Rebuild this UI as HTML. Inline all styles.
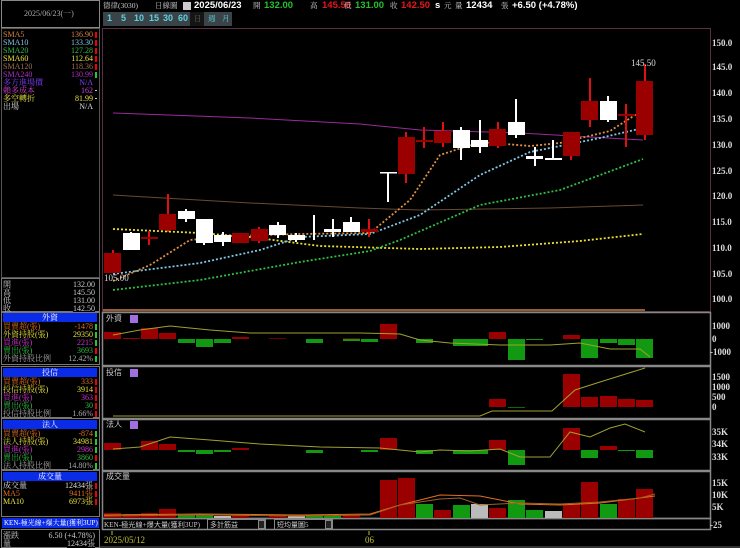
<!DOCTYPE html>
<html><head><meta charset="utf-8"><style>
*{margin:0;padding:0;box-sizing:border-box}
body{width:740px;height:548px;background:#000;overflow:hidden;position:relative;font-family:"Liberation Serif","Noto Serif CJK SC","Noto Sans CJK TC",serif;font-size:9px;color:#ddd}
.a{position:absolute;white-space:nowrap;line-height:1}
.row{position:absolute;left:3px;width:94px;height:9px;font-size:8px;line-height:9px;overflow:hidden}
.row .v{position:absolute;right:4px;background:#000}
.row .m{position:absolute;right:0;width:2px;height:6px;top:2px}
.hd{position:absolute;left:3px;width:94px;height:9px;background:#0a2be8;color:#fff;text-align:center;font-size:8px;line-height:9px}
.box{position:absolute;left:1px;width:99px;border:1px solid #777}
.b{font-family:"Liberation Sans","Noto Sans CJK TC",sans-serif;font-weight:bold;font-size:9.5px}
.s{color:#ccc;font-size:7.5px;top:2px}
.btn{position:absolute;top:14px;color:#5fd0e0;font-family:"Liberation Sans",sans-serif;font-weight:bold;font-size:9px;line-height:1}
</style></head><body>

<div class="box" style="top:0;height:28px;border-color:#888"></div>
<div class="a" style="left:24px;top:10px;color:#aaa;font-size:8px">2025/06/23(一)</div>
<div class="box" style="top:28px;height:250px;border-color:#555"></div>
<div class="row" style="top:30px;color:#d9843a">SMA5<span class="v">136.90</span><span class="m" style="background:#e00"></span></div>
<div class="row" style="top:38px;color:#7fc4e8">SMA10<span class="v">133.30</span><span class="m" style="background:#e00"></span></div>
<div class="row" style="top:46px;color:#2fbf3f">SMA20<span class="v">127.28</span><span class="m" style="background:#e00"></span></div>
<div class="row" style="top:54px;color:#e8e040">SMA60<span class="v">112.64</span><span class="m" style="background:#e00"></span></div>
<div class="row" style="top:62px;color:#a07050">SMA120<span class="v">118.36</span><span class="m" style="background:#e00"></span></div>
<div class="row" style="top:70px;color:#b030c0">SMA240<span class="v">130.99</span><span class="m" style="background:#2c2"></span></div>
<div class="row" style="top:78px;color:#8040ff">多方進場價<span class="v">N/A</span></div>
<div class="row" style="top:86px;color:#d040d0">賴多成本<span class="v">162</span><span class="m" style="background:#ccc;height:1px;top:4px"></span></div>
<div class="row" style="top:94px;color:#e8e040">多空轉折<span class="v">81.99</span><span class="m" style="background:#ccc;height:1px;top:4px"></span></div>
<div class="row" style="top:102px;color:#ddd">出場<span class="v">N/A</span></div>

<div class="box" style="top:278px;height:34px;border-color:#777"></div>
<div class="row" style="top:280px;color:#ccc">開<span class="v" style="right:2px">132.00</span></div>
<div class="row" style="top:288px;color:#ccc">高<span class="v" style="right:2px">145.50</span></div>
<div class="row" style="top:296px;color:#ccc">低<span class="v" style="right:2px">131.00</span></div>
<div class="row" style="top:304px;color:#ccc">收<span class="v" style="right:2px">142.50</span></div>

<div class="box" style="top:312px;height:53px;border-color:#777"></div>
<div class="hd" style="top:313px">外資</div>
<div class="row" style="top:322px;color:#e07020">買賣超(張)<span class="v">-1478</span><span class="m" style="background:#2c2"></span></div>
<div class="row" style="top:330px;color:#e8e040">外資持股(張)<span class="v">29350</span><span class="m" style="background:#2c2"></span></div>
<div class="row" style="top:338px;color:#d030d0">買進(張)<span class="v">2215</span><span class="m" style="background:#2c2"></span></div>
<div class="row" style="top:346px;color:#2fbf3f">賣出(張)<span class="v">3693</span><span class="m" style="background:#e00"></span></div>
<div class="row" style="top:354px;color:#aaa">外資持股比例<span class="v">12.42%</span><span class="m" style="background:#2c2"></span></div>

<div class="box" style="top:366px;height:52px;border-color:#777"></div>
<div class="hd" style="top:368px">投信</div>
<div class="row" style="top:377px;color:#e07020">買賣超(張)<span class="v">333</span><span class="m" style="background:#e00"></span></div>
<div class="row" style="top:385px;color:#e8e040">投信持股(張)<span class="v">3914</span><span class="m" style="background:#e00"></span></div>
<div class="row" style="top:393px;color:#d030d0">買進(張)<span class="v">363</span><span class="m" style="background:#e00"></span></div>
<div class="row" style="top:401px;color:#2fbf3f">賣出(張)<span class="v">30</span><span class="m" style="background:#e00"></span></div>
<div class="row" style="top:409px;color:#aaa">投信持股比例<span class="v">1.66%</span><span class="m" style="background:#e00"></span></div>

<div class="box" style="top:418px;height:52px;border-color:#777"></div>
<div class="hd" style="top:420px">法人</div>
<div class="row" style="top:429px;color:#e07020">買賣超(張)<span class="v">-874</span><span class="m" style="background:#2c2"></span></div>
<div class="row" style="top:437px;color:#e8e040">法人持股(張)<span class="v">34981</span><span class="m" style="background:#2c2"></span></div>
<div class="row" style="top:445px;color:#d030d0">買進(張)<span class="v">2986</span><span class="m" style="background:#2c2"></span></div>
<div class="row" style="top:453px;color:#2fbf3f">賣出(張)<span class="v">3860</span><span class="m" style="background:#e00"></span></div>
<div class="row" style="top:461px;color:#aaa">法人持股比例<span class="v">14.80%</span><span class="m" style="background:#2c2"></span></div>

<div class="box" style="top:470px;height:47px;border-color:#777"></div>
<div class="hd" style="top:472px">成交量</div>
<div class="row" style="top:481px;color:#ddd">成交量<span class="v">12434張</span><span class="m" style="background:#e00"></span></div>
<div class="row" style="top:489px;color:#e07020">MA5<span class="v">9411張</span><span class="m" style="background:#e00"></span></div>
<div class="row" style="top:497px;color:#e8e040">MA10<span class="v">6973張</span><span class="m" style="background:#e00"></span></div>

<div class="a" style="left:2px;top:518px;width:97px;height:10px;background:#0a2be8;color:#fff;font-size:7px;line-height:10px;padding-left:2px;overflow:hidden">KEN-極光線+爆大量(獲利3UP)</div>
<div class="box" style="top:529px;height:19px;border-color:#777"></div>
<div class="row" style="top:531px;color:#ccc">漲跌<span class="v" style="right:2px">6.50 (+4.78%)</span></div>
<div class="row" style="top:539px;color:#ccc">量<span class="v" style="right:2px">12434張</span></div>

<!-- top bar -->
<div class="a s" style="left:103px">德律(3030)</div>
<div class="a s" style="left:155px">日線圖</div>
<div class="a" style="left:183px;top:2px;width:8px;height:8px;background:#ccc"></div>
<div class="a b" style="left:194px;top:1px;color:#fff">2025/06/23</div>
<div class="a s" style="left:253px">開</div>
<div class="a b" style="left:264px;top:1px;color:#22c22a">132.00</div>
<div class="a s" style="left:310px">高</div>
<div class="a b" style="left:322px;top:1px;color:#e8151a">145.50</div>
<div class="a s" style="left:344px">低</div>
<div class="a b" style="left:355px;top:1px;color:#22c22a">131.00</div>
<div class="a s" style="left:390px">收</div>
<div class="a b" style="left:401px;top:1px;color:#e8151a">142.50</div>
<div class="a b" style="left:435px;top:1px;color:#fff">s</div>
<div class="a s" style="left:444px">元</div>
<div class="a s" style="left:455px">量</div>
<div class="a b" style="left:466px;top:1px;color:#fff">12434</div>
<div class="a s" style="left:501px">張</div>
<div class="a b" style="left:512px;top:1px;color:#fff">+6.50 (+4.78%)</div>

<div class="a" style="left:103px;top:12px;width:129px;height:14px;background:#3a4448"></div>
<div class="btn" style="left:107px">1</div>
<div class="btn" style="left:121px">5</div>
<div class="btn" style="left:134px">10</div>
<div class="btn" style="left:149px">15</div>
<div class="btn" style="left:163px">30</div>
<div class="btn" style="left:178px">60</div>
<div class="a" style="left:190px;top:12px;width:14px;height:14px;background:#151515"></div>
<div class="a" style="left:194px;top:15px;color:#666;font-size:7.5px">日</div>
<div class="a" style="left:208px;top:15px;color:#5fd0e0;font-size:7.5px">週</div>
<div class="a" style="left:222px;top:15px;color:#5fd0e0;font-size:7.5px">月</div>

<svg class="a" style="left:0;top:0" width="740" height="548" font-family="Liberation Serif, serif" font-size="9">
<rect x="102.5" y="28.5" width="608" height="283" fill="none" stroke="#5a3040"/>
<g stroke="#888" stroke-width="1.5" fill="none">
<rect x="102.5" y="312.5" width="608" height="53"/>
<rect x="102.5" y="366.5" width="608" height="52"/>
<rect x="102.5" y="419.5" width="608" height="51"/>
<rect x="102.5" y="471.5" width="608" height="47"/>
<rect x="102.5" y="518.5" width="608" height="11"/>
</g>
<line x1="103" y1="310" x2="645" y2="310" stroke="#c08040" stroke-width="1.5"/>
<g fill="#ddd" font-weight="bold" font-size="9">
<text x="712" y="46">150.0</text><text x="712" y="70">145.0</text><text x="712" y="96">140.0</text><text x="712" y="122">135.0</text><text x="712" y="148">130.0</text><text x="712" y="174">125.0</text><text x="712" y="199">120.0</text><text x="712" y="225">115.0</text><text x="712" y="251">110.0</text><text x="712" y="277">105.0</text><text x="712" y="302">100.0</text>
<text x="712" y="329">1000</text><text x="712" y="342">0</text><text x="710" y="355">-1000</text>
<text x="712" y="380">1500</text><text x="712" y="390">1000</text><text x="712" y="400">500</text><text x="712" y="410">0</text>
<text x="712" y="435">35K</text><text x="712" y="447">34K</text><text x="712" y="460">33K</text>
<text x="712" y="486">15K</text><text x="712" y="498">10K</text><text x="712" y="510">5K</text><text x="710" y="528">-25</text>
</g>
<polyline points="113,113 250,118 360,124 420,130 520,133 643,140" fill="none" stroke="#9a2a9a" stroke-width="1"/>
<polyline points="113,195 250,203 360,208 420,210 550,208 643,205" fill="none" stroke="#6a4a30" stroke-width="1"/>
<g fill="none" stroke-width="1.8" stroke-dasharray="2 2">
<polyline points="113,229 200,233 250,237 320,246 420,249 500,247 580,241 643,234" stroke="#e8e030"/>
<polyline points="113,290 200,280 300,262 370,251 400,240 480,205 560,190 643,159" stroke="#30c040"/>
<polyline points="113,274 200,263 260,250 300,237 370,234 420,215 480,175 530,152 600,138 643,128" stroke="#80c8e8"/>
<polyline points="113,281 150,265 190,240 230,236 300,234 370,233 410,200 440,155 480,142 530,146 560,143 610,131 643,110" stroke="#e09040"/>
</g>
<g stroke-width="2">
<g stroke="#e01010"><line x1="113" y1="250" x2="113" y2="273"/><line x1="149" y1="231" x2="149" y2="245"/><line x1="168" y1="194" x2="168" y2="232"/><line x1="241" y1="233" x2="241" y2="243"/><line x1="259" y1="227" x2="259" y2="243"/><line x1="369" y1="219" x2="369" y2="237"/><line x1="406" y1="132" x2="406" y2="183"/><line x1="424" y1="127" x2="424" y2="148"/><line x1="443" y1="122" x2="443" y2="147"/><line x1="498" y1="122" x2="498" y2="148"/><line x1="571" y1="132" x2="571" y2="160"/><line x1="590" y1="78" x2="590" y2="127"/><line x1="626" y1="104" x2="626" y2="147"/><line x1="645" y1="64" x2="645" y2="140"/></g>
<g stroke="#fff"><line x1="131" y1="232" x2="131" y2="250"/><line x1="186" y1="209" x2="186" y2="222"/><line x1="204" y1="219" x2="204" y2="245"/><line x1="223" y1="232" x2="223" y2="246"/><line x1="278" y1="222" x2="278" y2="238"/><line x1="296" y1="233" x2="296" y2="242"/><line x1="314" y1="215" x2="314" y2="240"/><line x1="333" y1="219" x2="333" y2="237"/><line x1="351" y1="217" x2="351" y2="232"/><line x1="388" y1="172" x2="388" y2="202"/><line x1="461" y1="127" x2="461" y2="160"/><line x1="480" y1="120" x2="480" y2="153"/><line x1="516" y1="99" x2="516" y2="138"/><line x1="535" y1="147" x2="535" y2="166"/><line x1="553" y1="140" x2="553" y2="160"/><line x1="608" y1="96" x2="608" y2="122"/></g>
</g>
<g fill="#9a0000">
<rect x="104" y="253" width="17" height="20"/><rect x="141" y="237" width="17" height="2"/><rect x="159" y="214" width="17" height="16"/><rect x="232" y="233" width="17" height="10"/><rect x="251" y="229" width="17" height="12"/><rect x="361" y="229" width="17" height="3"/><rect x="398" y="137" width="17" height="37"/><rect x="416" y="140" width="17" height="2"/><rect x="434" y="131" width="17" height="12"/><rect x="489" y="129" width="17" height="17"/><rect x="563" y="132" width="17" height="24"/><rect x="581" y="101" width="17" height="19"/><rect x="618" y="114" width="17" height="2"/><rect x="636" y="81" width="17" height="54"/>
</g>
<g fill="#fff">
<rect x="123" y="233" width="17" height="17"/><rect x="178" y="211" width="17" height="8"/><rect x="196" y="219" width="17" height="24"/><rect x="214" y="235" width="17" height="7"/><rect x="269" y="225" width="17" height="10"/><rect x="288" y="235" width="17" height="5"/><rect x="324" y="229" width="17" height="3"/><rect x="343" y="222" width="17" height="10"/><rect x="380" y="172" width="17" height="1.5"/><rect x="453" y="130" width="17" height="18"/><rect x="471" y="140" width="17" height="7"/><rect x="508" y="122" width="17" height="13"/><rect x="526" y="156" width="17" height="3"/><rect x="545" y="158" width="17" height="2"/><rect x="600" y="101" width="17" height="19"/>
</g>
<text x="631" y="66" fill="#ddd">145.50</text>
<text x="104" y="281" fill="#ddd">105.00</text>

<text x="106" y="321" fill="#ccc" font-size="8">外資</text><rect x="130" y="315" width="8" height="8" fill="#a070e0"/>
<g fill="#9a0000"><rect x="104" y="332" width="17" height="7"/><rect x="123" y="338" width="17" height="1"/><rect x="141" y="328" width="17" height="11"/><rect x="159" y="333" width="17" height="6"/><rect x="232" y="337" width="17" height="2"/><rect x="380" y="324" width="17" height="15"/><rect x="489" y="332" width="17" height="7"/><rect x="563" y="335" width="17" height="4"/><rect x="269" y="338" width="17" height="1" fill="#600"/><rect x="343" y="338" width="17" height="1" fill="#600"/></g>
<g fill="#119a11"><rect x="178" y="339" width="17" height="4"/><rect x="196" y="339" width="17" height="8"/><rect x="214" y="339" width="17" height="4"/><rect x="306" y="339" width="17" height="4"/><rect x="343" y="339" width="17" height="2"/><rect x="361" y="339" width="17" height="3"/><rect x="416" y="339" width="17" height="4"/><rect x="453" y="339" width="35" height="7"/><rect x="508" y="339" width="17" height="21"/><rect x="526" y="339" width="17" height="1"/><rect x="581" y="339" width="17" height="19"/><rect x="600" y="339" width="17" height="4"/><rect x="618" y="339" width="17" height="6"/><rect x="636" y="339" width="17" height="19"/></g>
<polyline points="113,335 140,330 170,326 210,330 250,333 300,333 360,333 400,334 420,340 450,343 500,345 550,345 580,343 610,349 640,349 650,357" fill="none" stroke="#a0a030" stroke-width="1"/>
<text x="106" y="375" fill="#ccc" font-size="8">投信</text><rect x="130" y="369" width="8" height="8" fill="#a070e0"/>
<g fill="#9a0000"><rect x="489" y="399" width="17" height="8"/><rect x="563" y="374" width="17" height="33"/><rect x="581" y="397" width="17" height="10"/><rect x="600" y="396" width="17" height="11"/><rect x="618" y="399" width="17" height="8"/><rect x="636" y="400" width="17" height="7"/></g>
<rect x="508" y="407" width="17" height="1" fill="#0a6a0a"/>
<polyline points="113,416 480,416 492,411 552,411 575,390 600,382 645,368" fill="none" stroke="#a0a030" stroke-width="1"/>
<text x="106" y="427" fill="#ccc" font-size="8">法人</text><rect x="130" y="421" width="8" height="8" fill="#a070e0"/>
<g fill="#9a0000"><rect x="104" y="443" width="17" height="7"/><rect x="141" y="441" width="17" height="9"/><rect x="159" y="444" width="17" height="6"/><rect x="232" y="448" width="17" height="2"/><rect x="380" y="438" width="17" height="12"/><rect x="489" y="440" width="17" height="10"/><rect x="563" y="428" width="17" height="22"/><rect x="600" y="446" width="17" height="4"/></g>
<g fill="#119a11"><rect x="178" y="450" width="17" height="2"/><rect x="196" y="450" width="17" height="4"/><rect x="214" y="450" width="17" height="2"/><rect x="306" y="450" width="17" height="3"/><rect x="361" y="450" width="17" height="2"/><rect x="416" y="450" width="17" height="4"/><rect x="453" y="450" width="35" height="4"/><rect x="508" y="450" width="17" height="15"/><rect x="581" y="450" width="17" height="8"/><rect x="618" y="450" width="17" height="1"/><rect x="636" y="450" width="17" height="8"/></g>
<polyline points="113,449 140,447 170,437 210,440 260,444 320,447 380,448 420,452 440,450 470,451 500,449 520,457 550,457 570,432 590,437 610,428 625,424 645,432" fill="none" stroke="#a0a030" stroke-width="1"/>
<text x="106" y="479" fill="#ccc" font-size="8">成交量</text>
<g fill="#9a0000"><rect x="104" y="513" width="17" height="5"/><rect x="123" y="514" width="17" height="4"/><rect x="141" y="513" width="17" height="5"/><rect x="159" y="509" width="17" height="9"/><rect x="232" y="515" width="17" height="3"/><rect x="269" y="515" width="17" height="3"/><rect x="343" y="515" width="17" height="3"/><rect x="380" y="480" width="17" height="38"/><rect x="398" y="478" width="17" height="40"/><rect x="434" y="510" width="17" height="8"/><rect x="489" y="508" width="17" height="10"/><rect x="563" y="504" width="17" height="14"/><rect x="581" y="482" width="17" height="36"/><rect x="618" y="499" width="17" height="19"/><rect x="636" y="489" width="17" height="29"/></g>
<g fill="#119a11"><rect x="178" y="515" width="17" height="3"/><rect x="196" y="515" width="17" height="3"/><rect x="306" y="515" width="17" height="3"/><rect x="324" y="516" width="17" height="2"/><rect x="416" y="504" width="17" height="14"/><rect x="453" y="505" width="17" height="13"/><rect x="508" y="500" width="17" height="18"/><rect x="526" y="510" width="17" height="8"/><rect x="600" y="504" width="17" height="14"/></g>
<g fill="#bbb"><rect x="214" y="516" width="17" height="2"/><rect x="288" y="516" width="17" height="2"/><rect x="471" y="504" width="17" height="14"/><rect x="545" y="511" width="17" height="7"/></g>
<polyline points="104,515 200,514 300,515 370,514 400,505 440,495 480,496 520,504 560,505 600,503 640,498 655,496" fill="none" stroke="#e07020" stroke-width="1"/>
<polyline points="104,516 200,515 300,516 370,515 400,505 440,499 460,498 480,505 520,503 560,504 600,502 640,498 655,494" fill="none" stroke="#a06020" stroke-width="1"/>
<text x="104" y="527" fill="#ccc" font-size="7" textLength="96" lengthAdjust="spacingAndGlyphs">KEN-極光線+爆大量(獲利3UP)</text>
<rect x="207.5" y="519.5" width="58" height="10" fill="none" stroke="#888"/><text x="210" y="527" fill="#ccc" font-size="7">多計筋益</text><rect x="258.5" y="520.5" width="6" height="8" fill="#222" stroke="#888"/>
<rect x="274.5" y="519.5" width="58" height="10" fill="none" stroke="#888"/><text x="277" y="527" fill="#ccc" font-size="7">短均量圖5</text><rect x="325.5" y="520.5" width="6" height="8" fill="#222" stroke="#888"/>
<line x1="112" y1="531" x2="112" y2="535" stroke="#c0c030"/><line x1="369" y1="531" x2="369" y2="535" stroke="#c0c030"/>
<text x="104" y="543" fill="#c0c030" font-size="9">2025/05/12</text>
<text x="365" y="543" fill="#c0c030" font-size="9">06</text>
<rect x="100" y="546" width="640" height="2" fill="#333"/>
</svg>
</body></html>
